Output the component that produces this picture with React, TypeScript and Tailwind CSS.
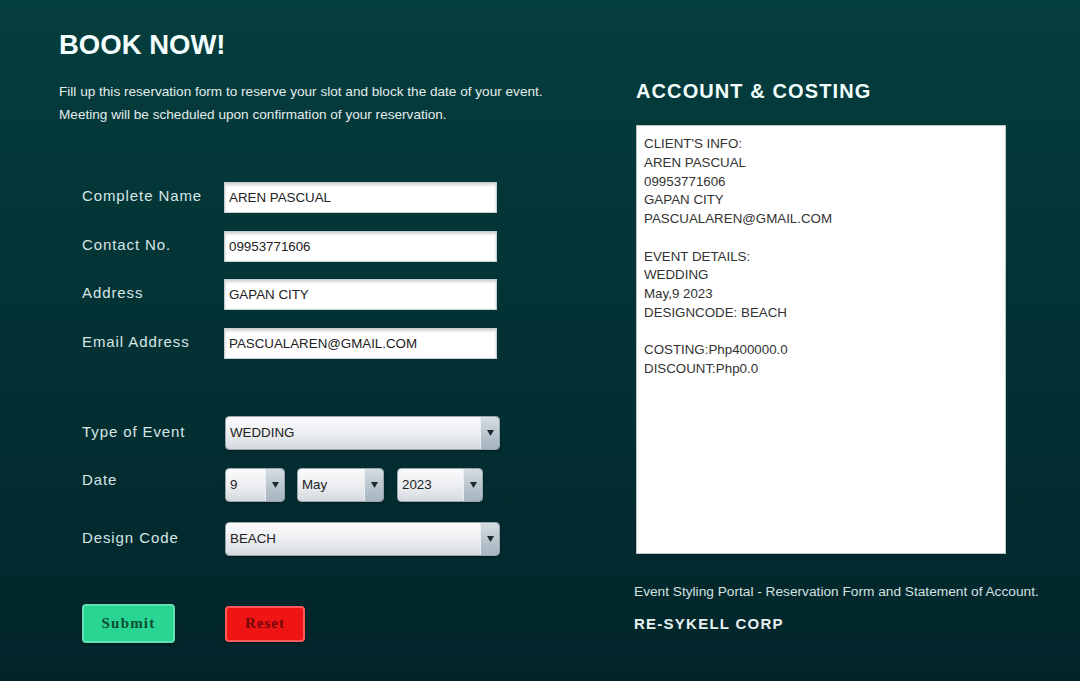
import React, { useState } from 'react';

const Field = ({ label, value }: { label: string; value: string }) => (
  <div className="flex items-center h-[31px]">
    <label className="w-[142px] pb-[2px] text-[15px] tracking-[0.06em] text-[#d6e6e6]">{label}</label>
    <input
      readOnly
      value={value}
      className="w-[273px] h-[31px] bg-white border border-[#c5cfcf] shadow-[inset_0_2px_3px_rgba(0,0,0,0.18)] pl-[4px] text-[13.33px] text-[#222] outline-none"
    />
  </div>
);

const Select = ({ value, width }: { value: string; width: string }) => (
  <div
    className={`${width} h-[34px] flex rounded-[4px] border border-[#9aa6ae] overflow-hidden shadow-[0_1px_2px_rgba(0,0,0,0.4)]`}
  >
    <div className="flex-1 flex items-center pl-[4px] bg-gradient-to-b from-[#fbfbfc] via-[#eceef1] to-[#d6dae0] text-[13.33px] text-[#222]">
      {value}
    </div>
    <div className="w-[19px] flex items-center justify-center border-l border-[#e8eef2] bg-gradient-to-b from-[#d5dde3] via-[#bcc7cf] to-[#a7b4be]">
      <svg width="7" height="6" viewBox="0 0 7 6">
        <path d="M0 0 L7 0 L3.5 6 Z" fill="#1e2a33" />
      </svg>
    </div>
  </div>
);

const App = () => {
  const [name] = useState('AREN PASCUAL');
  const [contact] = useState('09953771606');
  const [address] = useState('GAPAN CITY');
  const [email] = useState('PASCUALAREN@GMAIL.COM');

  const statement = [
    "CLIENT'S INFO:",
    name,
    contact,
    address,
    email,
    '',
    'EVENT DETAILS:',
    'WEDDING',
    'May,9 2023',
    'DESIGNCODE: BEACH',
    '',
    'COSTING:Php400000.0',
    'DISCOUNT:Php0.0',
  ];

  return (
    <div
      className="w-full min-h-[681px] flex bg-gradient-to-b from-[#053e3e] to-[#02252a]"
      style={{ fontFamily: '"Liberation Sans", Arial, sans-serif' }}
    >
      {/* Left: booking form */}
      <div className="w-[636px] pl-[59px] pt-[29px]">
        <h1 className="text-[27.5px] leading-[32px] font-bold text-[#f4ffff]">BOOK NOW!</h1>
        <p className="mt-[19px] text-[13.6px] leading-[23px] text-[#e2ecec]">
          Fill up this reservation form to reserve your slot and block the date of your event.
          <br />
          Meeting will be scheduled upon confirmation of your reservation.
        </p>

        <div className="ml-[23px] mt-[56px] flex flex-col gap-[17.5px]">
          <Field label="Complete Name" value={name} />
          <Field label="Contact No." value={contact} />
          <Field label="Address" value={address} />
          <Field label="Email Address" value={email} />
        </div>

        <div className="ml-[23px] mt-[57px] flex flex-col">
          <div className="flex items-center">
            <label className="w-[143px] text-[15px] tracking-[0.06em] text-[#d6e6e6]">Type of Event</label>
            <Select value="WEDDING" width="w-[275px]" />
          </div>
          <div className="flex items-center mt-[18px]">
            <label className="w-[143px] pb-[9px] text-[15px] tracking-[0.06em] text-[#d6e6e6]">Date</label>
            <div className="flex">
              <Select value="9" width="w-[60px]" />
              <div className="ml-[12px]">
                <Select value="May" width="w-[87px]" />
              </div>
              <div className="ml-[13px]">
                <Select value="2023" width="w-[86px]" />
              </div>
            </div>
          </div>
          <div className="flex items-center mt-[20px]">
            <label className="w-[143px] text-[15px] tracking-[0.06em] text-[#d6e6e6]">Design Code</label>
            <Select value="BEACH" width="w-[275px]" />
          </div>
        </div>

        <div className="ml-[23px] mt-[48px] flex items-start gap-[50px]" style={{ fontFamily: '"Liberation Serif", "Times New Roman", serif' }}>
          <button className="w-[93px] h-[39px] rounded-[4px] bg-[#29d592] border-2 border-[#62dfb4] shadow-[0_1px_3px_rgba(0,0,0,0.5)] text-[15px] font-bold tracking-[1.2px] text-[#0c4d31]">
            Submit
          </button>
          <button className="mt-[2px] w-[80px] h-[36px] rounded-[4px] bg-[#f01515] border-2 border-[#ff5a5a] shadow-[0_1px_3px_rgba(0,0,0,0.5)] text-[15px] font-bold tracking-[1px] text-[#730808]">
            Reset
          </button>
        </div>
      </div>

      {/* Right: statement of account */}
      <div className="flex-1 pt-[79px]">
        <h2 className="text-[20px] leading-[24px] font-bold tracking-[1.1px] text-[#f4ffff]">ACCOUNT &amp; COSTING</h2>
        <div className="mt-[22px] w-[370px] h-[429px] bg-white border border-[#b9c6c6] pl-[7px] pt-[9px] text-[13.33px] leading-[18.75px] text-[#333]">
          {statement.map((line, i) => (
            <div key={i} className="h-[18.75px]">{line}</div>
          ))}
        </div>
        <p className="mt-[29px] -ml-[2px] text-[13.7px] leading-[18px] text-[#d4e0e0]">
          Event Styling Portal - Reservation Form and Statement of Account.
        </p>
        <p className="mt-[13px] -ml-[2px] text-[15px] leading-[20px] font-bold tracking-[1.25px] text-[#e6f0f0]">RE-SYKELL CORP</p>
      </div>
    </div>
  );
};

export default App;
